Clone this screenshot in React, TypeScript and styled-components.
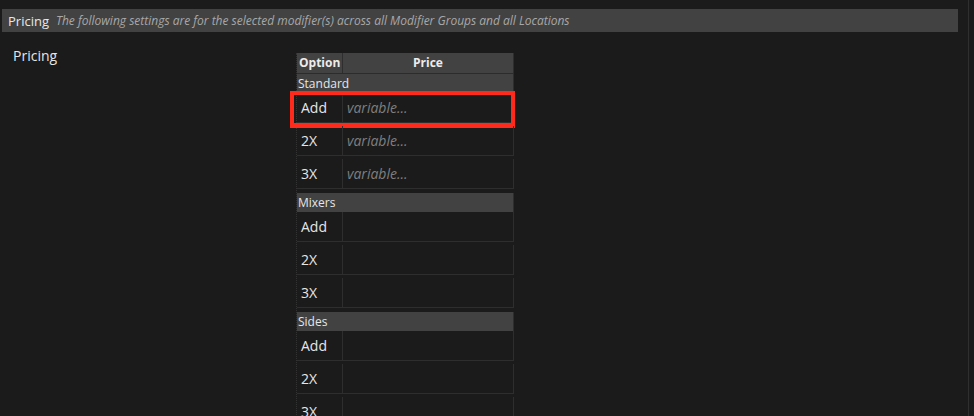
import React from 'react';
import styled, { createGlobalStyle } from 'styled-components';

const GlobalStyle = createGlobalStyle`
  html, body {
    margin: 0;
    padding: 0;
    background: #1b1b1b;
  }
  body {
    font-family: 'Open Sans', 'DejaVu Sans', sans-serif;
    color: #e6e6e6;
  }
`;

type Group = { name: string; options: Array<string>; placeholder?: string };

const groups: Array<Group> = [
    { name: 'Standard', options: ['Add', '2X', '3X'], placeholder: 'variable...' },
    { name: 'Mixers', options: ['Add', '2X', '3X'] },
    { name: 'Sides', options: ['Add', '2X', '3X'] },
];

export default function App() {
    return (
        <>
            <GlobalStyle />
            <Page>
                <SectionBar>
                    <BarTitle>Pricing</BarTitle>
                    <BarNote>The following settings are for the selected modifier(s) across all Modifier Groups and all Locations</BarNote>
                </SectionBar>
                <Content>
                    <FieldLabel>Pricing</FieldLabel>
                    <PriceTable>
                        <HeadRow>
                            <HeadCell>Option</HeadCell>
                            <HeadCell center>Price</HeadCell>
                        </HeadRow>
                        {groups.map((group, gi) => (
                            <GroupBlock key={group.name} first={gi === 0}>
                                <GroupRow>{group.name}</GroupRow>
                                {group.options.map((opt, oi) => (
                                    <DataRow key={opt}>
                                        <OptionCell>{opt}</OptionCell>
                                        <PriceCell>
                                            {group.placeholder && <Placeholder>{group.placeholder}</Placeholder>}
                                        </PriceCell>
                                        {gi === 0 && oi === 0 && <Highlight />}
                                    </DataRow>
                                ))}
                            </GroupBlock>
                        ))}
                    </PriceTable>
                </Content>
            </Page>
        </>
    );
}

const Page = styled.div`
    width: 969px;
    height: 416px;
    overflow: hidden;
    border-right: 1px solid #2f2f2f;
    padding-top: 9px;
    box-sizing: border-box;
`
const SectionBar = styled.div`
    margin-left: 2px;
    width: 956px;
    height: 23px;
    background: #424242;
    display: flex;
    align-items: center;
    gap: 7px;
    padding-left: 6px;
    box-sizing: border-box;
    white-space: nowrap;
`
const BarTitle = styled.span`
    font-size: 13px;
    color: #e8e8e8;
`
const BarNote = styled.span`
    font-size: 12px;
    font-style: italic;
    color: #a8a8a8;
`
const Content = styled.div`
    display: grid;
    grid-template-columns: 296px 218px;
    align-items: start;
    margin-top: 21px;
`
const FieldLabel = styled.div`
    padding-left: 13px;
    margin-top: -4px;
    font-size: 14px;
    line-height: 14px;
    color: #e6e6e6;
`
const PriceTable = styled.div`
    display: flex;
    flex-direction: column;
    border-left: 1px dotted #333;
`
const HeadRow = styled.div`
    display: grid;
    grid-template-columns: 46px 1fr;
    height: 21px;
    background: #424242;
    border-bottom: 1px solid #2c2c2c;
    box-sizing: border-box;
`
const HeadCell = styled.div<{ center?: boolean }>`
    font-size: 12px;
    font-weight: 700;
    line-height: 20px;
    color: #ececec;
    padding-left: ${props => props.center ? '0' : '2px'};
    text-align: ${props => props.center ? 'center' : 'left'};
    border-right: 1px solid #2e2e2e;
`
const GroupBlock = styled.div<{ first?: boolean }>`
    display: flex;
    flex-direction: column;
    gap: 3px;
    margin-top: ${props => props.first ? '0' : '4px'};
`
const GroupRow = styled.div`
    height: 19px;
    margin-bottom: -3px;
    background: #424242;
    font-size: 12px;
    line-height: 19px;
    padding-left: 1px;
    color: #e6e6e6;
    border-right: 1px solid #2e2e2e;
`
const DataRow = styled.div`
    position: relative;
    display: grid;
    grid-template-columns: 46px 1fr;
    height: 30px;
    border-bottom: 1px solid #2e2e2e;
    border-right: 1px solid #2e2e2e;
    box-sizing: border-box;
`
const OptionCell = styled.div`
    padding-left: 4px;
    font-size: 14px;
    line-height: 29px;
    color: #e6e6e6;
    border-right: 1px solid #2e2e2e;
`
const PriceCell = styled.div`
    padding-left: 4px;
    font-size: 14px;
    line-height: 29px;
`
const Placeholder = styled.span`
    font-style: italic;
    color: #7f7f7f;
`
const Highlight = styled.div`
    position: absolute;
    left: -7px;
    right: -2px;
    top: -2px;
    bottom: -6px;
    border: 4px solid #ff2a1c;
    border-bottom-width: 5px;
    pointer-events: none;
`
